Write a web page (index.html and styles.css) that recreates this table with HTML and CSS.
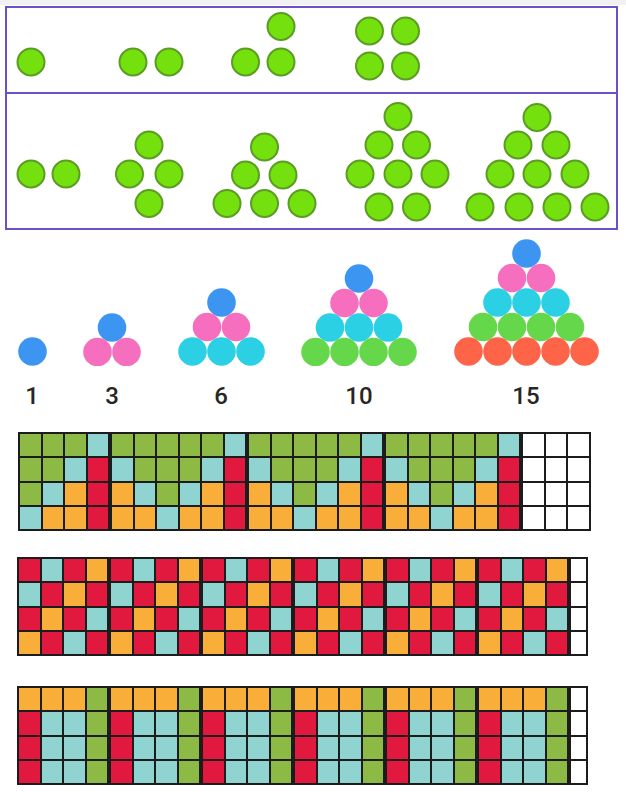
FILE: index.html
```html
<!DOCTYPE html>
<html>
<head>
<meta charset="utf-8">
<link rel="stylesheet" href="styles.css">
</head>
<body>
<div class="topbar"></div>

<section class="dots-box">
  <div class="dots-row row-a">
    <svg width="609" height="84" viewBox="7 8 609 84">
      <circle class="gd" cx="31" cy="62" r="13.5"/>
      <circle class="gd" cx="133" cy="62" r="13.5"/>
      <circle class="gd" cx="169" cy="62" r="13.5"/>
      <circle class="gd" cx="245.5" cy="62" r="13.5"/>
      <circle class="gd" cx="281" cy="62" r="13.5"/>
      <circle class="gd" cx="281" cy="26.5" r="13.5"/>
      <circle class="gd" cx="369.5" cy="31" r="13.5"/>
      <circle class="gd" cx="405.5" cy="31" r="13.5"/>
      <circle class="gd" cx="369.5" cy="66" r="13.5"/>
      <circle class="gd" cx="405.5" cy="66" r="13.5"/>
    </svg>
  </div>
  <div class="dots-row row-b">
    <svg width="609" height="134" viewBox="7 94 609 134">
      <circle class="gd" cx="31" cy="174" r="13.5"/>
      <circle class="gd" cx="66" cy="174" r="13.5"/>

      <circle class="gd" cx="149" cy="145" r="13.5"/>
      <circle class="gd" cx="129.5" cy="174" r="13.5"/>
      <circle class="gd" cx="169" cy="174" r="13.5"/>
      <circle class="gd" cx="149" cy="203.5" r="13.5"/>

      <circle class="gd" cx="264.5" cy="147" r="13.5"/>
      <circle class="gd" cx="245.5" cy="175" r="13.5"/>
      <circle class="gd" cx="283" cy="175" r="13.5"/>
      <circle class="gd" cx="227" cy="203.5" r="13.5"/>
      <circle class="gd" cx="264.5" cy="203.5" r="13.5"/>
      <circle class="gd" cx="302" cy="203.5" r="13.5"/>

      <circle class="gd" cx="398" cy="116.5" r="13.5"/>
      <circle class="gd" cx="379" cy="145" r="13.5"/>
      <circle class="gd" cx="416.5" cy="145" r="13.5"/>
      <circle class="gd" cx="360" cy="174" r="13.5"/>
      <circle class="gd" cx="398" cy="174" r="13.5"/>
      <circle class="gd" cx="435" cy="174" r="13.5"/>
      <circle class="gd" cx="379" cy="207" r="13.5"/>
      <circle class="gd" cx="416.5" cy="207" r="13.5"/>

      <circle class="gd" cx="537" cy="117.5" r="13.5"/>
      <circle class="gd" cx="518" cy="145" r="13.5"/>
      <circle class="gd" cx="556" cy="145" r="13.5"/>
      <circle class="gd" cx="500" cy="174" r="13.5"/>
      <circle class="gd" cx="537" cy="174" r="13.5"/>
      <circle class="gd" cx="575" cy="174" r="13.5"/>
      <circle class="gd" cx="480" cy="207" r="13.5"/>
      <circle class="gd" cx="519" cy="207" r="13.5"/>
      <circle class="gd" cx="557" cy="207" r="13.5"/>
      <circle class="gd" cx="595" cy="207" r="13.5"/>
    </svg>
  </div>
</section>

<section class="tri-row">
  <figure class="tri">
    <svg width="29" height="29" viewBox="0 0 29 29">
      <circle class="c0" cx="14.5" cy="14.5" r="14.3"/>
    </svg>
    <figcaption>1</figcaption>
  </figure>
  <figure class="tri">
    <svg width="58" height="53.5" viewBox="0 0 58 53.5">
      <circle class="c0" cx="29" cy="14.5" r="14.3"/>
      <circle class="c1" cx="14.5" cy="39" r="14.3"/>
      <circle class="c1" cx="43.5" cy="39" r="14.3"/>
    </svg>
    <figcaption>3</figcaption>
  </figure>
  <figure class="tri">
    <svg width="87" height="78" viewBox="0 0 87 78">
      <circle class="c0" cx="43.5" cy="14.5" r="14.3"/>
      <circle class="c1" cx="29" cy="39" r="14.3"/>
      <circle class="c1" cx="58" cy="39" r="14.3"/>
      <circle class="c2" cx="14.5" cy="63.5" r="14.3"/>
      <circle class="c2" cx="43.5" cy="63.5" r="14.3"/>
      <circle class="c2" cx="72.5" cy="63.5" r="14.3"/>
    </svg>
    <figcaption>6</figcaption>
  </figure>
  <figure class="tri">
    <svg width="116" height="102.5" viewBox="0 0 116 102.5">
      <circle class="c0" cx="58" cy="14.5" r="14.3"/>
      <circle class="c1" cx="43.5" cy="39" r="14.3"/>
      <circle class="c1" cx="72.5" cy="39" r="14.3"/>
      <circle class="c2" cx="29" cy="63.5" r="14.3"/>
      <circle class="c2" cx="58" cy="63.5" r="14.3"/>
      <circle class="c2" cx="87" cy="63.5" r="14.3"/>
      <circle class="c3" cx="14.5" cy="88" r="14.3"/>
      <circle class="c3" cx="43.5" cy="88" r="14.3"/>
      <circle class="c3" cx="72.5" cy="88" r="14.3"/>
      <circle class="c3" cx="101.5" cy="88" r="14.3"/>
    </svg>
    <figcaption>10</figcaption>
  </figure>
  <figure class="tri">
    <svg width="145" height="127" viewBox="0 0 145 127">
      <circle class="c0" cx="72.5" cy="14.5" r="14.3"/>
      <circle class="c1" cx="58" cy="39" r="14.3"/>
      <circle class="c1" cx="87" cy="39" r="14.3"/>
      <circle class="c2" cx="43.5" cy="63.5" r="14.3"/>
      <circle class="c2" cx="72.5" cy="63.5" r="14.3"/>
      <circle class="c2" cx="101.5" cy="63.5" r="14.3"/>
      <circle class="c3" cx="29" cy="88" r="14.3"/>
      <circle class="c3" cx="58" cy="88" r="14.3"/>
      <circle class="c3" cx="87" cy="88" r="14.3"/>
      <circle class="c3" cx="116" cy="88" r="14.3"/>
      <circle class="c4" cx="14.5" cy="112.5" r="14.3"/>
      <circle class="c4" cx="43.5" cy="112.5" r="14.3"/>
      <circle class="c4" cx="72.5" cy="112.5" r="14.3"/>
      <circle class="c4" cx="101.5" cy="112.5" r="14.3"/>
      <circle class="c4" cx="130.5" cy="112.5" r="14.3"/>
    </svg>
    <figcaption>15</figcaption>
  </figure>
</section>

<section class="strip strip-1">
  <div class="blk b4">
    <i class="g"></i><i class="g"></i><i class="g"></i><i class="t"></i>
    <i class="g"></i><i class="g"></i><i class="t"></i><i class="r"></i>
    <i class="g"></i><i class="t"></i><i class="o"></i><i class="r"></i>
    <i class="t"></i><i class="o"></i><i class="o"></i><i class="r"></i>
  </div>
  <div class="blk b6">
    <i class="g"></i><i class="g"></i><i class="g"></i><i class="g"></i><i class="g"></i><i class="t"></i>
    <i class="t"></i><i class="g"></i><i class="g"></i><i class="g"></i><i class="t"></i><i class="r"></i>
    <i class="o"></i><i class="t"></i><i class="g"></i><i class="t"></i><i class="o"></i><i class="r"></i>
    <i class="o"></i><i class="o"></i><i class="t"></i><i class="o"></i><i class="o"></i><i class="r"></i>
  </div>
  <div class="blk b6">
    <i class="g"></i><i class="g"></i><i class="g"></i><i class="g"></i><i class="g"></i><i class="t"></i>
    <i class="t"></i><i class="g"></i><i class="g"></i><i class="g"></i><i class="t"></i><i class="r"></i>
    <i class="o"></i><i class="t"></i><i class="g"></i><i class="t"></i><i class="o"></i><i class="r"></i>
    <i class="o"></i><i class="o"></i><i class="t"></i><i class="o"></i><i class="o"></i><i class="r"></i>
  </div>
  <div class="blk b6">
    <i class="g"></i><i class="g"></i><i class="g"></i><i class="g"></i><i class="g"></i><i class="t"></i>
    <i class="t"></i><i class="g"></i><i class="g"></i><i class="g"></i><i class="t"></i><i class="r"></i>
    <i class="o"></i><i class="t"></i><i class="g"></i><i class="t"></i><i class="o"></i><i class="r"></i>
    <i class="o"></i><i class="o"></i><i class="t"></i><i class="o"></i><i class="o"></i><i class="r"></i>
  </div>
  <div class="blk b3">
    <i class="w"></i><i class="w"></i><i class="w"></i>
    <i class="w"></i><i class="w"></i><i class="w"></i>
    <i class="w"></i><i class="w"></i><i class="w"></i>
    <i class="w"></i><i class="w"></i><i class="w"></i>
  </div>
</section>

<section class="strip strip-2">
  <div class="blk b4">
    <i class="r"></i><i class="t"></i><i class="r"></i><i class="o"></i>
    <i class="t"></i><i class="r"></i><i class="o"></i><i class="r"></i>
    <i class="r"></i><i class="o"></i><i class="r"></i><i class="t"></i>
    <i class="o"></i><i class="r"></i><i class="t"></i><i class="r"></i>
  </div>
  <div class="blk b4">
    <i class="r"></i><i class="t"></i><i class="r"></i><i class="o"></i>
    <i class="t"></i><i class="r"></i><i class="o"></i><i class="r"></i>
    <i class="r"></i><i class="o"></i><i class="r"></i><i class="t"></i>
    <i class="o"></i><i class="r"></i><i class="t"></i><i class="r"></i>
  </div>
  <div class="blk b4">
    <i class="r"></i><i class="t"></i><i class="r"></i><i class="o"></i>
    <i class="t"></i><i class="r"></i><i class="o"></i><i class="r"></i>
    <i class="r"></i><i class="o"></i><i class="r"></i><i class="t"></i>
    <i class="o"></i><i class="r"></i><i class="t"></i><i class="r"></i>
  </div>
  <div class="blk b4">
    <i class="r"></i><i class="t"></i><i class="r"></i><i class="o"></i>
    <i class="t"></i><i class="r"></i><i class="o"></i><i class="r"></i>
    <i class="r"></i><i class="o"></i><i class="r"></i><i class="t"></i>
    <i class="o"></i><i class="r"></i><i class="t"></i><i class="r"></i>
  </div>
  <div class="blk b4">
    <i class="r"></i><i class="t"></i><i class="r"></i><i class="o"></i>
    <i class="t"></i><i class="r"></i><i class="o"></i><i class="r"></i>
    <i class="r"></i><i class="o"></i><i class="r"></i><i class="t"></i>
    <i class="o"></i><i class="r"></i><i class="t"></i><i class="r"></i>
  </div>
  <div class="blk b4">
    <i class="r"></i><i class="t"></i><i class="r"></i><i class="o"></i>
    <i class="t"></i><i class="r"></i><i class="o"></i><i class="r"></i>
    <i class="r"></i><i class="o"></i><i class="r"></i><i class="t"></i>
    <i class="o"></i><i class="r"></i><i class="t"></i><i class="r"></i>
  </div>
  <div class="blk b1">
    <i class="w"></i><i class="w"></i><i class="w"></i><i class="w"></i>
  </div>
</section>

<section class="strip strip-3">
  <div class="blk b4">
    <i class="o"></i><i class="o"></i><i class="o"></i><i class="g"></i>
    <i class="r"></i><i class="t"></i><i class="t"></i><i class="g"></i>
    <i class="r"></i><i class="t"></i><i class="t"></i><i class="g"></i>
    <i class="r"></i><i class="t"></i><i class="t"></i><i class="g"></i>
  </div>
  <div class="blk b4">
    <i class="o"></i><i class="o"></i><i class="o"></i><i class="g"></i>
    <i class="r"></i><i class="t"></i><i class="t"></i><i class="g"></i>
    <i class="r"></i><i class="t"></i><i class="t"></i><i class="g"></i>
    <i class="r"></i><i class="t"></i><i class="t"></i><i class="g"></i>
  </div>
  <div class="blk b4">
    <i class="o"></i><i class="o"></i><i class="o"></i><i class="g"></i>
    <i class="r"></i><i class="t"></i><i class="t"></i><i class="g"></i>
    <i class="r"></i><i class="t"></i><i class="t"></i><i class="g"></i>
    <i class="r"></i><i class="t"></i><i class="t"></i><i class="g"></i>
  </div>
  <div class="blk b4">
    <i class="o"></i><i class="o"></i><i class="o"></i><i class="g"></i>
    <i class="r"></i><i class="t"></i><i class="t"></i><i class="g"></i>
    <i class="r"></i><i class="t"></i><i class="t"></i><i class="g"></i>
    <i class="r"></i><i class="t"></i><i class="t"></i><i class="g"></i>
  </div>
  <div class="blk b4">
    <i class="o"></i><i class="o"></i><i class="o"></i><i class="g"></i>
    <i class="r"></i><i class="t"></i><i class="t"></i><i class="g"></i>
    <i class="r"></i><i class="t"></i><i class="t"></i><i class="g"></i>
    <i class="r"></i><i class="t"></i><i class="t"></i><i class="g"></i>
  </div>
  <div class="blk b4">
    <i class="o"></i><i class="o"></i><i class="o"></i><i class="g"></i>
    <i class="r"></i><i class="t"></i><i class="t"></i><i class="g"></i>
    <i class="r"></i><i class="t"></i><i class="t"></i><i class="g"></i>
    <i class="r"></i><i class="t"></i><i class="t"></i><i class="g"></i>
  </div>
  <div class="blk b1">
    <i class="w"></i><i class="w"></i><i class="w"></i><i class="w"></i>
  </div>
</section>
</body>
</html>
```

FILE: styles.css
```css
html, body {
  margin: 0;
  padding: 0;
  background: #ffffff;
}

body {
  width: 626px;
  font-family: Roboto, "Liberation Sans", Arial, sans-serif;
}

.topbar {
  height: 5px;
  background: #f1f1f4;
}

/* framed dot patterns */
.dots-box {
  width: 609px;
  margin: 1px 0 0 5px;
  border: 2px solid #6b50c8;
}

.dots-row svg {
  display: block;
}

.row-a {
  height: 84px;
  border-bottom: 2px solid #6b50c8;
}

.row-b {
  height: 134px;
}

.gd {
  fill: #74e00d;
  stroke: #5b9c22;
  stroke-width: 2;
}

/* coloured triangular numbers */
.tri-row {
  display: flex;
  align-items: flex-end;
  gap: 36.5px;
  margin-top: 9px;
  padding-left: 17.5px;
}

.tri {
  margin: 0;
  display: flex;
  flex-direction: column;
  align-items: center;
}

.tri svg {
  display: block;
}

.tri figcaption {
  margin-top: 18px;
  font-size: 24px;
  line-height: 24px;
  font-weight: 500;
  color: #262626;
}

.c0 { fill: #3d95f2; }
.c1 { fill: #f66fbf; }
.c2 { fill: #2bd0e4; }
.c3 { fill: #64d74b; }
.c4 { fill: #fe6447; }

/* coloured square strips */
.strip {
  display: flex;
  align-items: flex-start;
}

.strip-1 {
  margin: 24px 0 0 18px;
}

.strip-2 {
  margin: 26px 0 0 17px;
}

.strip-3 {
  margin: 30px 0 0 17px;
}

.blk {
  display: grid;
  gap: 2px;
  padding: 2px;
  background: #1c1c1c;
  grid-auto-rows: 22.25px;
}

.b6 { grid-template-columns: repeat(6, 20.5px); }
.b4 { grid-template-columns: repeat(4, 20.5px); }
.b3 { grid-template-columns: repeat(3, 20.5px); }
.b1 { grid-template-columns: 15px; }

.blk i {
  display: block;
}

.g { background: #8cba45; }
.t { background: #8fd4d0; }
.r { background: #e1193e; }
.o { background: #f9ae3a; }
.w { background: #ffffff; }
```
